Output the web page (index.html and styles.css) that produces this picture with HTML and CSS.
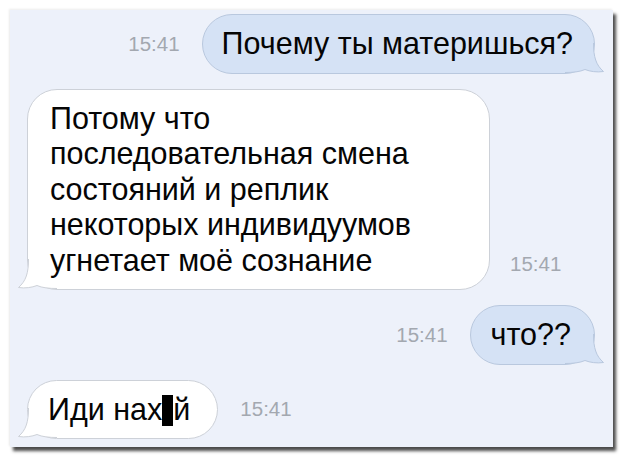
FILE: index.html
```html
<!DOCTYPE html>
<html lang="ru">
<head>
    <meta charset="UTF-8">
    <title>Переписка</title>
    <link rel="stylesheet" href="styles.css">
</head>
<body>
<div class="chat">
    <div class="row sent">
        <span class="time">15:41</span>
        <div class="bubble first">
            Почему ты материшься?
            <svg class="tail" viewBox="0 0 40 30"><path class="tail-fill" d="M0,0 L28.5,0 C28.5,14 31,22 38.5,28.5 C32,29.5 25,28.5 20,26.5 C15,28.8 8,29.5 0,29.5 Z"/><path class="tail-line" d="M28.5,0 C28.5,14 31,22 38.5,28.5 C32,29.5 25,28.5 20,26.5 C15,28.8 8,29.5 0,29.5"/></svg>
        </div>
    </div>

    <div class="row received bottom">
        <div class="bubble wide">
            Потому что<br>
            последовательная смена<br>
            состояний и реплик<br>
            некоторых индивидуумов<br>
            угнетает моё сознание
            <svg class="tail" viewBox="0 0 40 30"><path class="tail-fill" d="M0,0 L28.5,0 C28.5,14 31,22 38.5,28.5 C32,29.5 25,28.5 20,26.5 C15,28.8 8,29.5 0,29.5 Z"/><path class="tail-line" d="M28.5,0 C28.5,14 31,22 38.5,28.5 C32,29.5 25,28.5 20,26.5 C15,28.8 8,29.5 0,29.5"/></svg>
        </div>
        <span class="time">15:41</span>
    </div>

    <div class="row sent">
        <span class="time">15:41</span>
        <div class="bubble">
            что??
            <svg class="tail" viewBox="0 0 40 30"><path class="tail-fill" d="M0,0 L28.5,0 C28.5,14 31,22 38.5,28.5 C32,29.5 25,28.5 20,26.5 C15,28.8 8,29.5 0,29.5 Z"/><path class="tail-line" d="M28.5,0 C28.5,14 31,22 38.5,28.5 C32,29.5 25,28.5 20,26.5 C15,28.8 8,29.5 0,29.5"/></svg>
        </div>
    </div>

    <div class="row received">
        <div class="bubble last">
            Иди нах<span class="censor"></span>й
            <svg class="tail" viewBox="0 0 40 30"><path class="tail-fill" d="M0,0 L28.5,0 C28.5,14 31,22 38.5,28.5 C32,29.5 25,28.5 20,26.5 C15,28.8 8,29.5 0,29.5 Z"/><path class="tail-line" d="M28.5,0 C28.5,14 31,22 38.5,28.5 C32,29.5 25,28.5 20,26.5 C15,28.8 8,29.5 0,29.5"/></svg>
        </div>
        <span class="time">15:41</span>
    </div>
</div>
</body>
</html>
```

FILE: styles.css
```css
body {
    margin: 0;
    background-color: #ffffff;
    font-family: "Liberation Sans", Arial, sans-serif;
}

.chat {
    margin: 10px;
    width: 603px;
    height: 437px;
    box-sizing: border-box;
    padding: 4px 18px 0 17px;
    background-color: #edf1fa;
    display: flex;
    flex-direction: column;
    gap: 15px;
    box-shadow: 3px 4px 3px rgba(0, 0, 0, 0.7), -1px -1px 2px rgba(0, 0, 0, 0.08);
}

.row {
    display: flex;
    align-items: center;
    gap: 22px;
}

.row.sent {
    justify-content: flex-end;
}

.row.bottom {
    align-items: flex-end;
    gap: 20px;
}

.row.bottom .time {
    margin-bottom: 14px;
}

.time {
    font-size: 20.5px;
    color: #a3a8b0;
}

.bubble {
    position: relative;
    isolation: isolate;
    padding: 11px 23px 11px 20px;
    font-size: 30.5px;
    line-height: 35.5px;
    color: #050505;
    border-radius: 30px;
    border: 1px solid #cdd1d8;
    background-color: #ffffff;
}

.bubble.first {
    padding-left: 19px;
    padding-right: 21px;
}

.bubble.wide {
    width: 416px;
    padding-left: 22px;
}

.bubble.last {
    padding-right: 27px;
}

.sent .bubble {
    background-color: #d5e2f5;
    border-color: #b9c8de;
}

.tail {
    position: absolute;
    bottom: 0;
    width: 40px;
    height: 30px;
    z-index: -1;
}

.sent .tail {
    right: -11px;
}

.received .tail {
    left: -11px;
    transform: scaleX(-1);
}

.tail-fill {
    fill: #ffffff;
}

.tail-line {
    fill: none;
    stroke: #cdd1d8;
    stroke-width: 1;
}

.sent .tail-fill {
    fill: #d5e2f5;
}

.sent .tail-line {
    stroke: #b9c8de;
}

.censor {
    display: inline-block;
    width: 11px;
    height: 31px;
    background-color: #000000;
    vertical-align: -6px;
}
```
